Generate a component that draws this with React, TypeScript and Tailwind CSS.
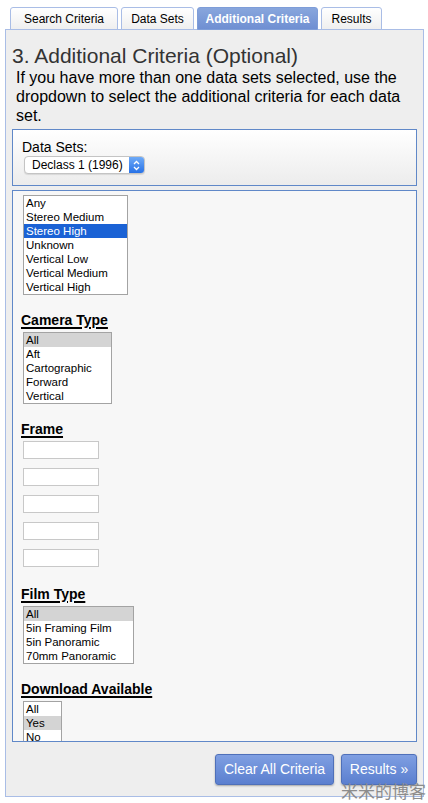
const tabs = [
  { label: "Search Criteria", w: "w-[108px]", active: false },
  { label: "Data Sets", w: "w-[73px]", active: false },
  { label: "Additional Criteria", w: "w-[121px]", active: true },
  { label: "Results", w: "w-[61px]", active: false },
]

function ListBox({
  items,
  width,
  selected,
  blue,
}: {
  items: string[]
  width: string
  selected: number
  blue?: boolean
}) {
  return (
    <div className={`ml-[2px] ${width} border border-[#a3a3a3] bg-white`}>
      {items.map((it, i) => (
        <div
          key={it}
          className={`h-[14px] pl-[2px] text-[11.5px] leading-[14px] ${
            i === selected ? (blue ? "bg-[#1a62d5] text-white" : "bg-[#d4d4d4] text-black") : "text-black"
          }`}
        >
          {it}
        </div>
      ))}
    </div>
  )
}

function Heading({ children }: { children: string }) {
  return (
    <div className="h-[16px] text-[14px] leading-[16px] font-bold text-black underline decoration-[1.5px] underline-offset-[2px]">
      {children}
    </div>
  )
}

export default function App() {
  return (
    <div className="relative h-[803px] w-[428px] overflow-hidden bg-white font-['Liberation_Sans',Arial,sans-serif]">
      <div className="flex gap-[3px] pl-[10px] pt-[7px]">
        {tabs.map((t) => (
          <div
            key={t.label}
            className={`${t.w} -mb-px flex h-[23px] items-center justify-center rounded-t-[3px] border text-[12px] ${
              t.active
                ? "border-[#7e9dd8] bg-gradient-to-b from-[#88a6dd] to-[#6f8fd2] font-bold text-white"
                : "border-[#a9bde6] bg-gradient-to-b from-white to-[#efefef] text-black"
            }`}
          >
            {t.label}
          </div>
        ))}
      </div>

      <div className="ml-[5px] flex h-[768px] w-[419px] flex-col border border-[#a9bde6] bg-[#eeeeee] px-[6px]">
        <div className="mt-[14px] text-[21px] leading-[24px] text-[#333]">3. Additional Criteria (Optional)</div>
        <p className="pl-[4px] text-[16px] leading-[19px] text-black">
          If you have more than one data sets selected, use the dropdown to select the additional criteria for each data
          set.
        </p>

        <div className="mt-[4px] h-[57px] shrink-0 border border-[#6088c8] bg-gradient-to-b from-white to-[#ececec] pl-[9px] pt-[9px]">
          <div className="text-[14px] leading-[16px] text-black">Data Sets:</div>
          <div className="mt-[1px] ml-[2px] flex h-[18px] w-[121px] rounded-[4px] border border-[#c4c4c4] bg-white shadow-[0_1px_1px_rgba(0,0,0,0.1)]">
            <div className="flex-1 pl-[7px] text-[12px] leading-[16px] text-black">Declass 1 (1996)</div>
            <div className="flex w-[15px] items-center justify-center rounded-r-[3px] bg-gradient-to-b from-[#6eaaf7] to-[#2771e6]">
              <svg width="7" height="11" viewBox="0 0 7 11" fill="none" stroke="white" strokeWidth="1.3">
                <path d="M1 4 L3.5 1.5 L6 4" />
                <path d="M1 7 L3.5 9.5 L6 7" />
              </svg>
            </div>
          </div>
        </div>

        <div className="mt-[4px] h-[552px] shrink-0 overflow-hidden border border-[#6088c8] bg-[#f7f7f7] pl-[8px] pt-[4px]">
          <ListBox
            items={["Any", "Stereo Medium", "Stereo High", "Unknown", "Vertical Low", "Vertical Medium", "Vertical High"]}
            width="w-[105px]"
            selected={2}
            blue
          />

          <div className="mt-[17px]">
            <Heading>Camera Type</Heading>
          </div>
          <div className="mt-[4px]">
            <ListBox items={["All", "Aft", "Cartographic", "Forward", "Vertical"]} width="w-[89px]" selected={0} />
          </div>

          <div className="mt-[17px]">
            <Heading>Frame</Heading>
          </div>
          <div className="mt-[4px] flex flex-col gap-[9px]">
            {[0, 1, 2, 3, 4].map((i) => (
              <div key={i} className="ml-[2px] h-[18px] w-[76px] border border-[#c8c8c8] bg-white" />
            ))}
          </div>

          <div className="mt-[19px]">
            <Heading>Film Type</Heading>
          </div>
          <div className="mt-[4px]">
            <ListBox
              items={["All", "5in Framing Film", "5in Panoramic", "70mm Panoramic"]}
              width="w-[111px]"
              selected={0}
            />
          </div>

          <div className="mt-[17px]">
            <Heading>Download Available</Heading>
          </div>
          <div className="mt-[4px]">
            <ListBox items={["All", "Yes", "No"]} width="w-[39px]" selected={1} />
          </div>
        </div>

        <div className="mt-[12px] flex justify-end gap-[7px]">
          <button className="h-[31px] w-[119px] rounded-[3px] border border-[#4f70b9] bg-gradient-to-b from-[#7f9fe2] to-[#5b7fcf] text-[14px] text-white shadow-[0_1px_2px_rgba(0,0,0,0.3)]">
            Clear All Criteria
          </button>
          <button className="h-[31px] w-[76px] rounded-[3px] border border-[#4f70b9] bg-gradient-to-b from-[#7f9fe2] to-[#5b7fcf] text-[14px] text-white shadow-[0_1px_2px_rgba(0,0,0,0.3)]">
            Results »
          </button>
        </div>
      </div>

      <div className="absolute bottom-[2px] right-[2px] font-['Noto_Sans_CJK_SC',sans-serif] text-[17px] leading-[20px] text-[#8c8c8c]">
        米米的博客
      </div>
    </div>
  )
}
